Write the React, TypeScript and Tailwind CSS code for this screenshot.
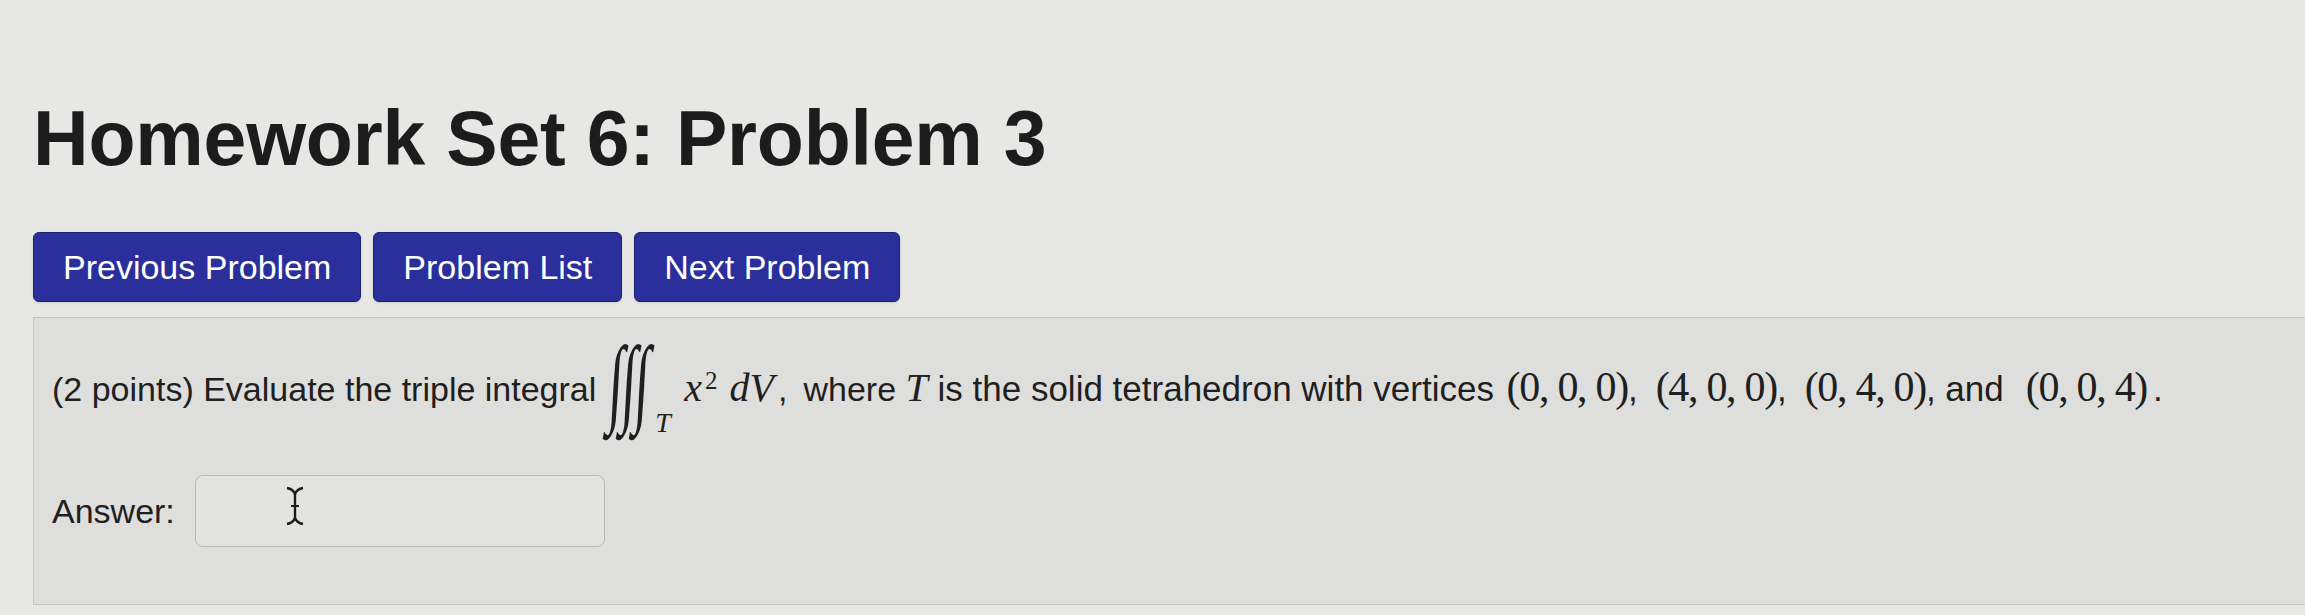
import React from "react";

const buttons = ["Previous Problem", "Problem List", "Next Problem"];

function Cursor() {
  return (
    <svg width="22" height="40" viewBox="0 0 22 40" className="absolute left-[88px] top-[10px]">
      <path d="M3 2 Q9 3 11 8 Q13 3 19 2" fill="none" stroke="#1a1a1a" strokeWidth="2.4" />
      <path d="M11 8 V32" stroke="#1a1a1a" strokeWidth="2.4" />
      <path d="M7 20 H15" stroke="#1a1a1a" strokeWidth="2" />
      <path d="M3 38 Q9 37 11 32 Q13 37 19 38" fill="none" stroke="#1a1a1a" strokeWidth="2.4" />
    </svg>
  );
}

// triple integral over T, stacked from three thin integral signs
function TripleIntegral() {
  const glyph =
    "absolute bottom-[-29px] origin-left scale-x-[0.55] -skew-x-6 font-['Liberation_Serif',serif] text-[98px] leading-none";
  return (
    <span className="relative ml-[13px] inline-block h-px w-[64px]">
      <span className={`${glyph} left-0`}>∫</span>
      <span className={`${glyph} left-[13px]`}>∫</span>
      <span className={`${glyph} left-[26px]`}>∫</span>
      <span className="absolute bottom-[-36px] left-[46px] font-['Liberation_Serif',serif] text-[28px] italic leading-none">
        T
      </span>
    </span>
  );
}

export default function App() {
  const serif = "font-['Liberation_Serif',serif] text-[40px]";
  const point = "font-['Liberation_Serif',serif] text-[42px] tracking-[-1.3px]";
  return (
    <div className="h-[615px] w-[2305px] overflow-hidden bg-[#e7e7e5] pl-[33px] pt-[100px] font-['Liberation_Sans',Arial,sans-serif] text-[#1f1f1f]">
      <h1 className="text-[77px] font-bold leading-none tracking-[-0.2px] text-[#1c1c1c]">
        Homework Set 6: Problem 3
      </h1>

      <div className="mt-[55px] flex gap-[12px]">
        {buttons.map((b) => (
          <button
            key={b}
            type="button"
            className="h-[70px] rounded-[6px] border border-[#1d2270] bg-[#2a2f9c] px-[29px] text-[34px] leading-none text-white shadow-sm"
          >
            {b}
          </button>
        ))}
      </div>

      <div className="mt-[15px] h-[288px] border-y border-l border-[#c6c6c4] bg-[#dededc] pl-[18px]">
        <div className="box-content flex h-[39px] items-baseline whitespace-nowrap pt-[50px] text-[34px] leading-[39px]">
          <span>(2 points) Evaluate the triple integral</span>
          <TripleIntegral />
          <span className={`${serif} ml-[11px] italic`}>x</span>
          <span className="relative -top-[12px] ml-[3px] font-['Liberation_Serif',serif] text-[25px]">2</span>
          <span className={`${serif} ml-[12px] italic`}>dV</span>
          <span className="ml-[4px]">,</span>
          <span className="ml-[16px]">where&nbsp;</span>
          <span className={`${serif} italic`}>T</span>
          <span className="text-[35px]">&nbsp;is the solid tetrahedron with vertices&nbsp;</span>
          <span className={`${point} ml-[3px]`}>(0, 0, 0)</span>
          <span className="mr-[18px] text-[35px]">,</span>
          <span className={point}>(4, 0, 0)</span>
          <span className="mr-[18px] text-[35px]">,</span>
          <span className={point}>(0, 4, 0)</span>
          <span className="text-[35px]">, and</span>
          <span className={`${point} ml-[22px]`}>(0, 0, 4)</span>
          <span className="ml-[6px] text-[35px]">.</span>
        </div>

        <div className="mt-[68px] flex items-center gap-[20px]">
          <span className="text-[34px]">Answer:</span>
          <div className="relative h-[72px] w-[410px] rounded-[8px] border border-[#b9b9b7] bg-[#e3e3e1]">
            <Cursor />
          </div>
        </div>
      </div>
    </div>
  );
}
